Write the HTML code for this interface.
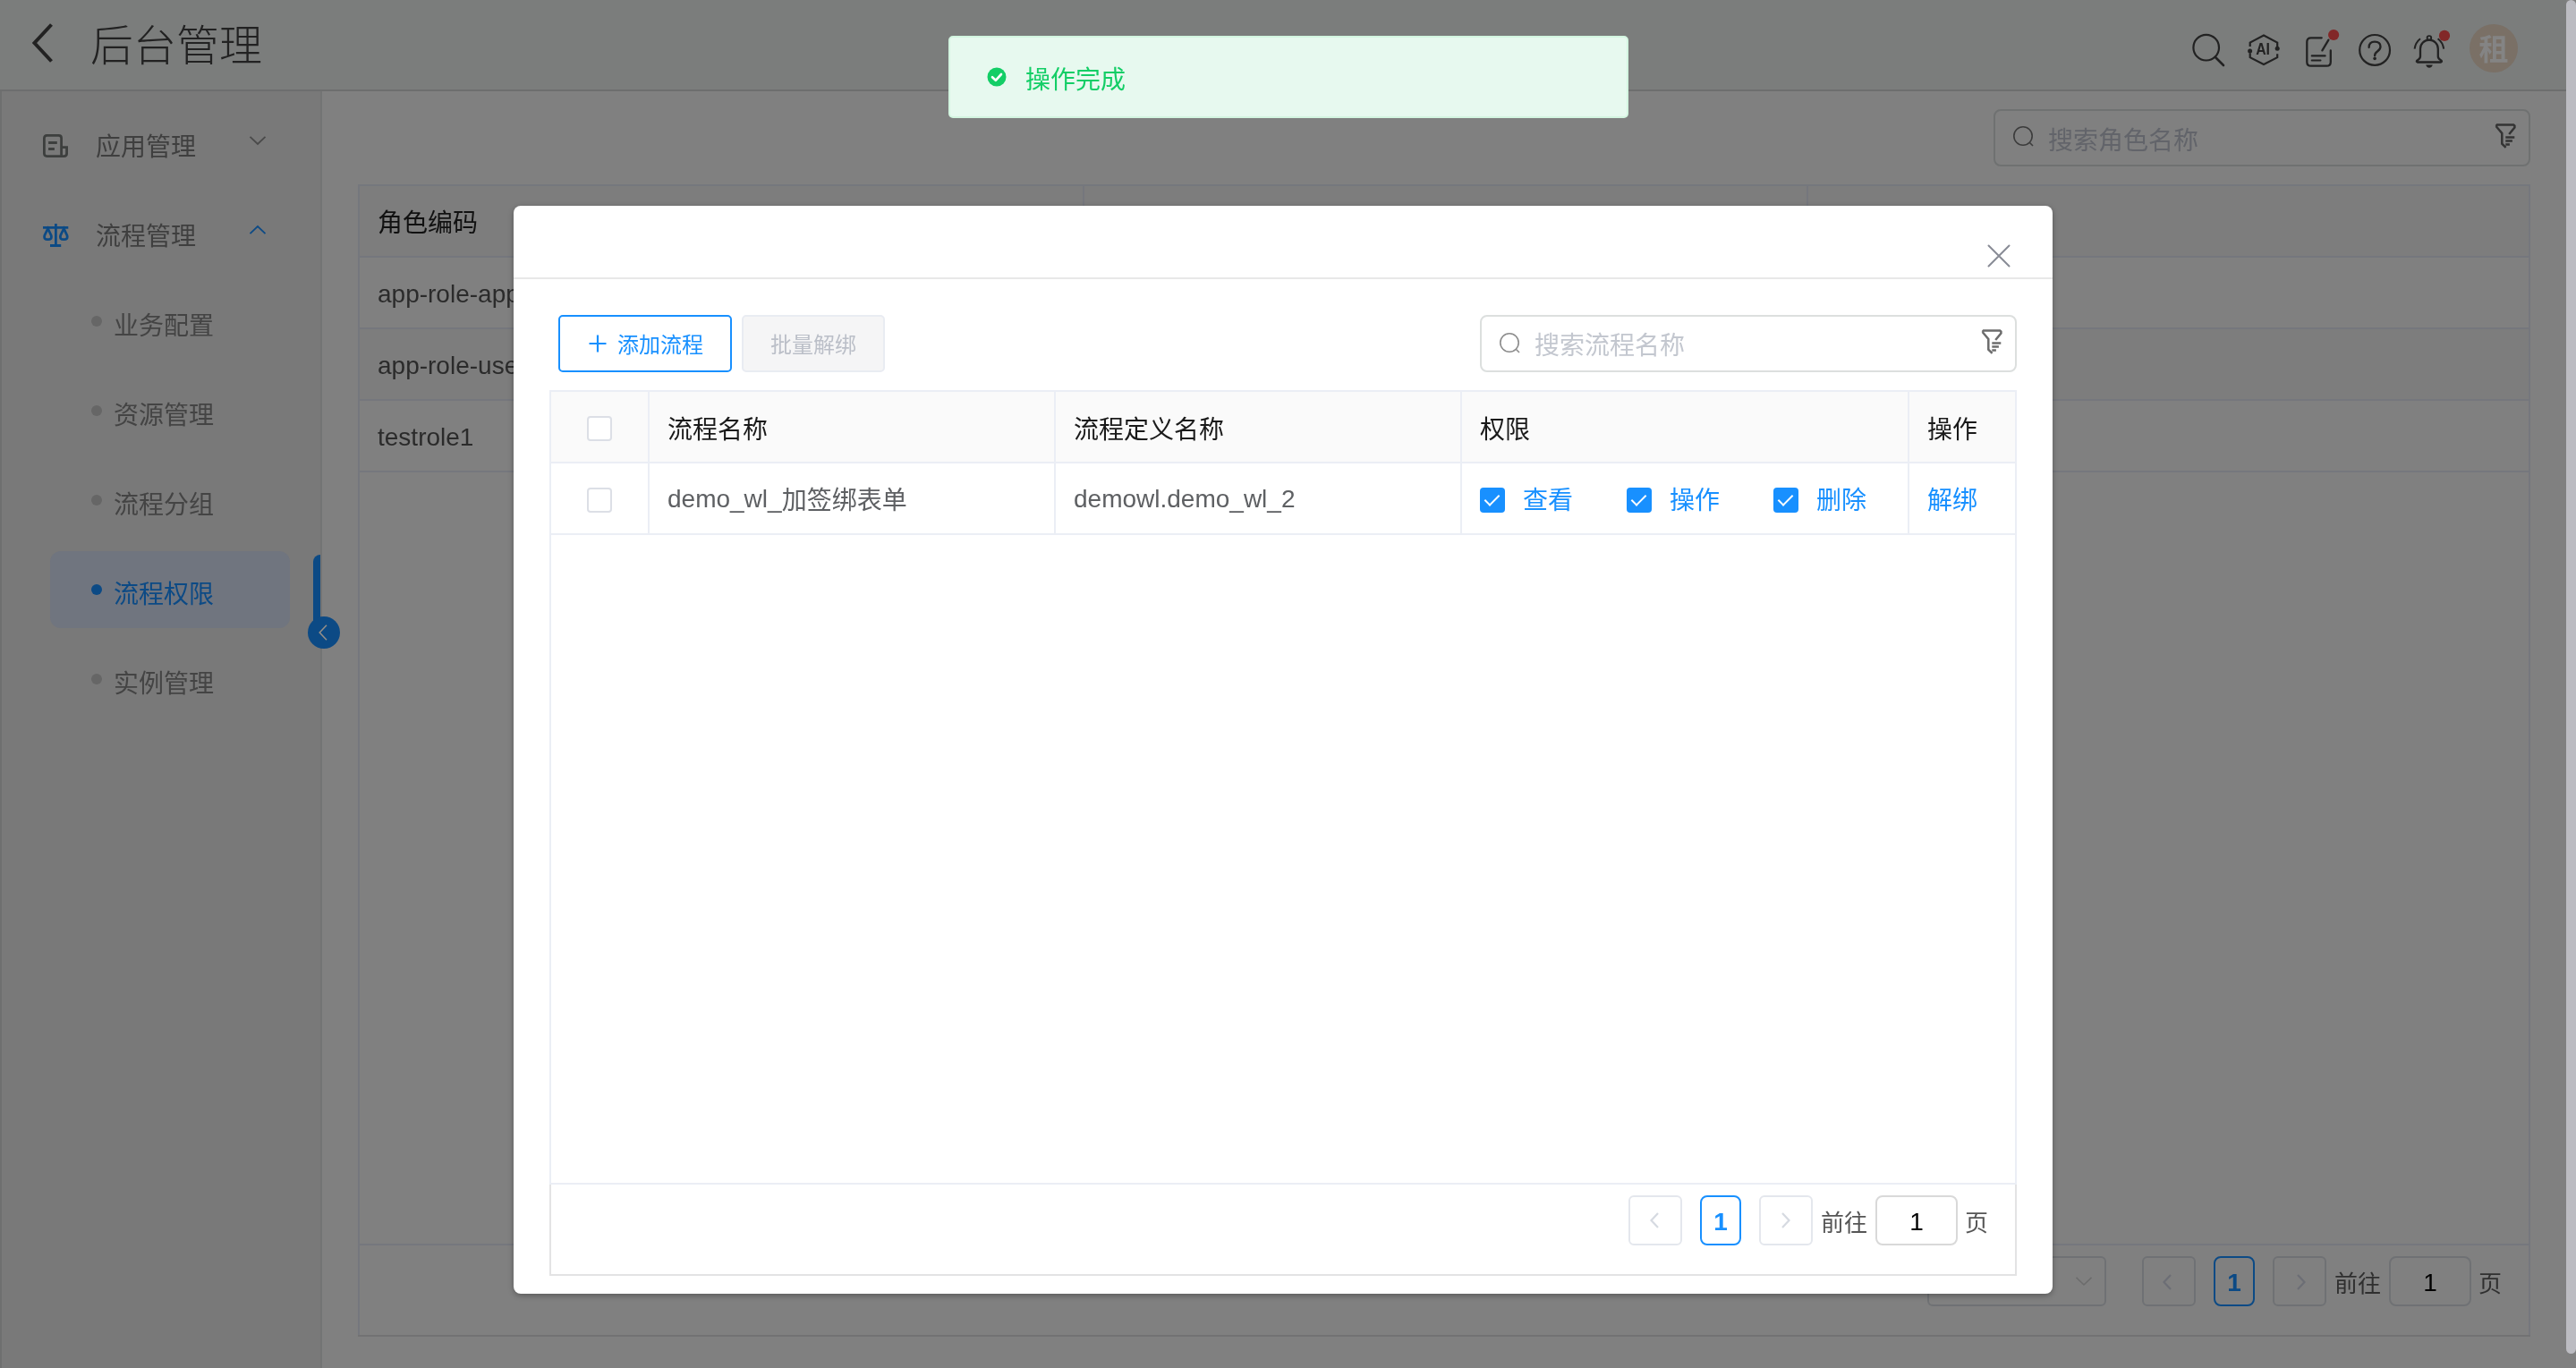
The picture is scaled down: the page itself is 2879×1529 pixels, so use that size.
<!DOCTYPE html>
<html lang="zh-CN">
<head>
<meta charset="utf-8">
<title>后台管理</title>
<style>
*{box-sizing:border-box;margin:0;padding:0}
html,body{width:2879px;height:1529px;overflow:hidden}
body{position:relative;background:#808080;font-family:"Liberation Sans","Noto Sans CJK SC",sans-serif;font-size:28px;color:#333}
.abs{position:absolute}
.t{position:absolute;white-space:nowrap;line-height:40px;height:40px;margin-top:2px;will-change:transform}
.lat{margin-top:0}
.cj{position:relative;top:2px}
svg{position:absolute;overflow:visible}
/* header */
#hdr{left:0;top:0;width:2868px;height:100px;background:#7b7d7c}
#hdrline{left:0;top:100px;width:2868px;height:2px;background:#6d6e6e}
#title{left:101px;top:26px;font-size:48px;line-height:48px;height:48px;font-weight:300;color:#222}
/* sidebar */
#side{left:2px;top:102px;width:356px;height:1427px;background:#797979}
#sideline{left:358px;top:102px;width:2px;height:1427px;background:#737474}
.m1{font-size:28px;color:#3f3f3f}
.m2{font-size:28px;color:#444}
.dot{position:absolute;width:12px;height:12px;border-radius:50%;background:#666}
#act{left:56px;top:616px;width:268px;height:86px;border-radius:12px;background:#70757f}
/* bg table */
.bl{position:absolute;background:#75777d}
.bt{font-size:28px;color:#2b2b2b}
/* modal */
#modal{left:574px;top:230px;width:1720px;height:1216px;background:#fff;border-radius:8px;box-shadow:0 2px 6px rgba(0,0,0,.3)}
.ml{position:absolute;background:#ebeef5}
.th{font-size:28px;color:#1a1a1a;margin-top:3px}
.td{font-size:28px;color:#5e6063}
.blue{color:#1890ff}
.cb{position:absolute;width:28px;height:28px;border:2px solid #dcdfe6;border-radius:4px;background:#fff}
.cbc{position:absolute;width:28px;height:28px;border-radius:4px;background:#1890ff}
.cbc:after{content:'';position:absolute;left:9px;top:4px;width:7px;height:14px;border:solid #fff;border-width:0 2.5px 2.5px 0;transform:rotate(45deg)}
.pbtn{position:absolute;height:56px;border:2px solid #e4e7ed;border-radius:6px;background:#fff}
.gpbtn{position:absolute;height:56px;border:2px solid #6f7174;border-radius:6px}
</style>
</head>
<body>
<!-- HEADER -->
<div class="abs" id="hdr"></div>
<div class="abs" id="hdrline"></div>
<svg style="left:34px;top:24px" width="28" height="48" viewBox="0 0 28 48"><path d="M23.500 3.500 L4.500 24 L23.500 44.500" fill="none" stroke="#222" stroke-width="4" stroke-linejoin="miter"/></svg>
<div class="t" id="title">后台管理</div>

<svg style="left:2448px;top:36px" width="40" height="40" viewBox="0 0 40 40"><circle cx="17.7" cy="17.2" r="14.3" fill="none" stroke="#222" stroke-width="2.2"/><path d="M28 28 L37 37" stroke="#222" stroke-width="2.6" stroke-linecap="round"/></svg>
<svg style="left:2510px;top:36px;will-change:transform" width="40" height="40" viewBox="0 0 40 40"><path d="M4.700 15.900 V11.600 L20 3.500 L35.200 11.600 V16 M35.200 24.300 V28.200 L20 36.100 L4.700 28.200 V23.200" fill="none" stroke="#222" stroke-width="2.200" stroke-linejoin="miter"/><circle cx="4.600" cy="21" r="2.500" fill="#222"/><circle cx="35.200" cy="18.300" r="2.500" fill="#222"/><text transform="translate(19.100 24.700) scale(0.890 1)" x="0" y="0" text-anchor="middle" font-family="Liberation Sans, sans-serif" font-weight="bold" font-size="17.800" fill="#222">AI</text></svg>
<svg style="left:2574px;top:30px" width="44" height="48" viewBox="0 0 44 48"><path d="M20.700 12.300 H8.800 Q4.300 12.300 4.300 16.800 V39.200 Q4.300 43.700 8.800 43.700 H26.300 Q30.800 43.700 30.800 39.200 V26.400" fill="none" stroke="#222" stroke-width="2.300" stroke-linecap="round"/><path d="M28.400 14.600 L21.400 26.400" stroke="#222" stroke-width="2.300" stroke-linecap="round"/><path d="M9.800 32.400 H24.600 M9.800 37.500 H19.400" stroke="#222" stroke-width="2.200" stroke-linecap="round"/><circle cx="34.100" cy="9" r="6.100" fill="#822828"/></svg>
<svg style="left:2634px;top:36px" width="40" height="40" viewBox="0 0 40 40"><circle cx="20.100" cy="19.900" r="16.900" fill="none" stroke="#222" stroke-width="2.200"/><path d="M13.600 17 Q13.600 10.600 20 10.600 Q26.500 10.600 26.500 16 Q26.500 19 23 21.500 Q20.100 23.500 20.100 26.200" fill="none" stroke="#222" stroke-width="2.300" stroke-linecap="round"/><circle cx="20.100" cy="29.400" r="1.800" fill="#222"/></svg>
<svg style="left:2694px;top:30px" width="48" height="50" viewBox="0 0 48 50"><circle cx="20.900" cy="12.400" r="2.300" fill="none" stroke="#222" stroke-width="1.900"/><path d="M11 33 V24.500 A9.900 9.900 0 0 1 30.800 24.500 V33 Q30.800 35.500 33.500 36.900 Q36.200 38.500 34 39.500 H7.800 Q5.600 38.500 8.300 36.900 Q11 35.500 11 33 Z" fill="none" stroke="#222" stroke-width="2.300" stroke-linejoin="round"/><path d="M17.200 42.400 H24.800 Q23.600 45.700 21 45.700 Q18.400 45.700 17.200 42.400 Z" fill="#222"/><path d="M11 13.300 Q5.600 17.500 4.600 24.600 M30.600 13.300 Q36.200 17.500 37.200 24.600" fill="none" stroke="#222" stroke-width="2" stroke-linecap="butt"/><circle cx="38" cy="9.900" r="6.100" fill="#822828"/></svg>
<div class="abs" style="left:2760px;top:27px;width:54px;height:54px;border-radius:50%;background:#7a7066"></div>
<div class="t" style="left:2770px;top:34px;font-size:33px;font-weight:700;color:#848484;width:34px;text-align:center">租</div>

<!-- SIDEBAR -->
<div class="abs" id="side"></div>
<div class="abs" id="sideline"></div>
<div class="abs" style="left:0;top:102px;width:2px;height:1427px;background:#6e6f6f"></div>

<svg style="left:48px;top:150px" width="28" height="26" viewBox="0 0 28 26"><path d="M4.400 1.400 H17.600 Q20.600 1.400 20.600 4.400 V24.600 H4.400 Q1.400 24.600 1.400 21.600 V4.400 Q1.400 1.400 4.400 1.400 Z M20.600 14.600 H26.600 V21.600 Q26.600 24.600 23.600 24.600 H20.600" fill="none" stroke="#3d3f3e" stroke-width="2.800"/><path d="M6.100 9.400 H15.800 M6.100 16.600 H12.900" stroke="#3d3f3e" stroke-width="3" fill="none"/></svg>
<div class="t m1" style="left:107px;top:143px">应用管理</div>
<svg style="left:279px;top:152px" width="18" height="10" viewBox="0 0 18 10"><path d="M0.5 0.8 L9 9 L17.5 0.8" fill="none" stroke="#4a4a4a" stroke-width="1.8"/></svg>
<svg style="left:48px;top:250px" width="28" height="26" viewBox="0 0 28 26"><g fill="none" stroke="#0c4a85" stroke-width="2.800"><path d="M0 4.400 H28.300 M14.400 0 V25 M8 24.500 H20.200"/><path d="M5.500 5.500 L1.900 13 Q0.500 17.700 5.500 17.700 Q10.500 17.700 9.100 13 Z"/><path d="M23.300 5.500 L19.700 13 Q18.300 17.700 23.300 17.700 Q28.300 17.700 26.900 13 Z"/></g></svg>
<div class="t m1" style="left:107px;top:243px">流程管理</div>
<svg style="left:279px;top:252px" width="18" height="10" viewBox="0 0 18 10"><path d="M0.5 9.2 L9 1 L17.5 9.2" fill="none" stroke="#0c4a85" stroke-width="1.8"/></svg>
<div class="dot" style="left:102px;top:353px"></div><div class="t m2" style="left:127px;top:343px">业务配置</div>
<div class="dot" style="left:102px;top:453px"></div><div class="t m2" style="left:127px;top:443px">资源管理</div>
<div class="dot" style="left:102px;top:553px"></div><div class="t m2" style="left:127px;top:543px">流程分组</div>
<div class="abs" id="act"></div>
<div class="dot" style="left:102px;top:653px;background:#0c4a85"></div><div class="t m2" style="left:127px;top:643px;color:#0c4a85">流程权限</div>
<div class="dot" style="left:102px;top:753px"></div><div class="t m2" style="left:127px;top:743px">实例管理</div>
<div class="abs" style="left:350px;top:620px;width:8px;height:80px;background:#0c4a85;border-radius:8px 0 0 0"></div>
<div class="abs" style="left:344px;top:689px;width:36px;height:36px;border-radius:50%;background:#0c4a85"></div>
<svg style="left:356px;top:698px" width="10" height="18" viewBox="0 0 10 18"><path d="M9 0.800 L1.200 9 L9 17.200" fill="none" stroke="#989088" stroke-width="1.500"/></svg>

<!-- BG CONTENT -->

<div class="abs" style="left:2228px;top:122px;width:600px;height:64px;border:2px solid #6f7171;border-radius:8px"></div>
<svg style="left:2249px;top:140px" width="26" height="26" viewBox="0 0 26 26"><circle cx="12" cy="12" r="10.2" fill="none" stroke="#3c3c3c" stroke-width="1.6"/><path d="M19.5 19.5 L23 23" stroke="#3c3c3c" stroke-width="1.6"/></svg>
<div class="t" style="left:2289px;top:136px;font-size:28px;color:#62646a">搜索角色名称</div>
<svg style="left:2786px;top:135px" width="28" height="32" viewBox="0 0 28 32"><path d="M3.600 6 L4.800 4.500 H23.200 L24.400 5.500 V7.600 L18.200 15 M3.600 6 L10.300 14 V25.700 L14.600 29.800" fill="none" stroke="#333" stroke-width="2.500" stroke-linejoin="miter"/><path d="M14.300 18.600 H24.300 M14.300 22.600 H21.900 M14.300 26.500 H18.900" stroke="#333" stroke-width="2.500" fill="none"/></svg>
<div class="abs" style="left:402px;top:208px;width:2424px;height:78px;background:#7d7d7d"></div>
<div class="abs" style="left:402px;top:368px;width:2424px;height:78px;background:#7d7d7d"></div>
<div class="bl" style="left:400px;top:206px;width:2428px;height:2px"></div>
<div class="bl" style="left:400px;top:206px;width:2px;height:1288px"></div>
<div class="bl" style="left:2826px;top:206px;width:2px;height:1288px"></div>
<div class="bl" style="left:400px;top:286px;width:2428px;height:2px"></div>
<div class="bl" style="left:400px;top:366px;width:2428px;height:2px"></div>
<div class="bl" style="left:400px;top:446px;width:2428px;height:2px"></div>
<div class="bl" style="left:400px;top:526px;width:2428px;height:2px"></div>
<div class="bl" style="left:400px;top:1390px;width:2428px;height:2px"></div>
<div class="bl" style="left:400px;top:1492px;width:2428px;height:2px;background:#727273"></div>
<div class="bl" style="left:1210px;top:206px;width:2px;height:80px"></div>
<div class="bl" style="left:2019px;top:206px;width:2px;height:80px"></div>
<div class="t bt" style="left:422px;top:228px;color:#111">角色编码</div>
<div class="t lat bt" style="left:422px;top:309px">app-role-app</div>
<div class="t lat bt" style="left:422px;top:389px">app-role-user</div>
<div class="t lat bt" style="left:422px;top:469px">testrole1</div>
<div class="gpbtn" style="left:2154px;top:1404px;width:200px;height:56px;border-radius:6px"></div>
<svg style="left:2320px;top:1427px" width="18" height="10" viewBox="0 0 18 10"><path d="M0.500 0.800 L9 9 L17.500 0.800" fill="none" stroke="#6c6c6c" stroke-width="1.600"/></svg>
<div class="gpbtn" style="left:2394px;top:1404px;width:60px"></div>
<svg style="left:2417px;top:1424px" width="10" height="18" viewBox="0 0 10 18"><path d="M9 1 L1.500 9 L9 17" fill="none" stroke="#6c6e75" stroke-width="2.200"/></svg>
<div class="gpbtn" style="left:2474px;top:1404px;width:46px;border-color:#0c4a85;border-radius:8px"></div>
<div class="t" style="left:2474px;top:1412px;width:46px;text-align:center;font-weight:bold;font-size:28px;color:#0c4a85">1</div>
<div class="gpbtn" style="left:2540px;top:1404px;width:60px"></div>
<svg style="left:2567px;top:1424px" width="10" height="18" viewBox="0 0 10 18"><path d="M1 1 L8.500 9 L1 17" fill="none" stroke="#6c6e75" stroke-width="2.200"/></svg>
<div class="t" style="left:2609px;top:1413px;font-size:26px;color:#2f2f2f">前往</div>
<div class="gpbtn" style="left:2670px;top:1404px;width:92px;border-radius:8px"></div>
<div class="t" style="left:2670px;top:1412px;width:92px;text-align:center;font-size:28px;color:#000">1</div>
<div class="t" style="left:2770px;top:1413px;font-size:26px;color:#2f2f2f">页</div>

<!-- TOAST -->

<div class="abs" style="left:1060px;top:40px;width:760px;height:92px;background:#e7f9ef;border:2px solid #d3f5e0;border-radius:5px"></div>
<svg style="left:1103px;top:75px" width="22" height="22" viewBox="0 0 22 22"><circle cx="11" cy="11" r="10.500" fill="#13ce66"/><path d="M6 11.200 L9.800 14.800 L16 8" fill="none" stroke="#fff" stroke-width="2.600" stroke-linecap="round" stroke-linejoin="round"/></svg>
<div class="t" style="left:1146px;top:68px;font-size:28px;color:#13ce66">操作完成</div>

<!-- MODAL -->
<div class="abs" id="modal">

<div class="abs" style="left:0;top:80px;width:1720px;height:2px;background:#e8e8e8"></div>
<svg style="left:1648px;top:44px" width="24" height="24" viewBox="0 0 24 24"><path d="M0.500 0.500 L23.500 23.500 M23.500 0.500 L0.500 23.500" stroke="#888b95" stroke-width="2" stroke-linecap="round" fill="none"/></svg>
<div class="abs" style="left:50px;top:122px;width:194px;height:64px;border:2px solid #1890ff;border-radius:5px;background:#fff"></div>
<svg style="left:84px;top:144px" width="20" height="20" viewBox="0 0 20 20"><path d="M10 0.500 V19.500 M0.500 10 H19.500" stroke="#1890ff" stroke-width="2.200" fill="none"/></svg>
<div class="t blue" style="left:116px;top:134px;font-size:24px">添加流程</div>
<div class="abs" style="left:255px;top:122px;width:160px;height:64px;border:2px solid #e9ecf2;border-radius:5px;background:#f5f5f6"></div>
<div class="t" style="left:287px;top:134px;font-size:24px;color:#bbbfc8">批量解绑</div>
<div class="abs" style="left:1080px;top:122px;width:600px;height:64px;border:2px solid #dcdfde;border-radius:8px;background:#fff"></div>
<svg style="left:1101px;top:141px" width="26" height="26" viewBox="0 0 26 26"><circle cx="12" cy="12" r="10.200" fill="none" stroke="#8c8c8c" stroke-width="1.600"/><path d="M19.500 19.500 L23 23" stroke="#8c8c8c" stroke-width="1.600"/></svg>
<div class="t" style="left:1141px;top:135px;font-size:28px;color:#c3c7cf">搜索流程名称</div>
<svg style="left:1638px;top:135px" width="28" height="32" viewBox="0 0 28 32"><path d="M3.600 6 L4.800 4.500 H23.200 L24.400 5.500 V7.600 L18.200 15 M3.600 6 L10.300 14 V25.700 L14.600 29.800" fill="none" stroke="#6c6c6c" stroke-width="2.500" stroke-linejoin="miter"/><path d="M14.300 18.600 H24.300 M14.300 22.600 H21.900 M14.300 26.500 H18.900" stroke="#6c6c6c" stroke-width="2.500" fill="none"/></svg>
<div class="abs" style="left:40px;top:206px;width:1640px;height:990px;border:2px solid #e3e3e4"></div>
<div class="abs" style="left:42px;top:208px;width:1636px;height:79px;background:#fafafa"></div>
<div class="ml" style="left:40px;top:206px;width:1640px;height:2px"></div>
<div class="ml" style="left:40px;top:286px;width:1640px;height:2px"></div>
<div class="ml" style="left:40px;top:366px;width:1640px;height:2px"></div>
<div class="ml" style="left:40px;top:206px;width:2px;height:886px"></div>
<div class="ml" style="left:1678px;top:206px;width:2px;height:886px"></div>
<div class="ml" style="left:150px;top:206px;width:2px;height:162px"></div>
<div class="ml" style="left:604px;top:206px;width:2px;height:162px"></div>
<div class="ml" style="left:1058px;top:206px;width:2px;height:162px"></div>
<div class="ml" style="left:1558px;top:206px;width:2px;height:162px"></div>
<div class="ml" style="left:40px;top:1092px;width:1640px;height:2px"></div>
<div class="cb" style="left:82px;top:235px"></div>
<div class="cb" style="left:82px;top:315px"></div>
<div class="t th" style="left:172px;top:228px">流程名称</div>
<div class="t th" style="left:626px;top:228px">流程定义名称</div>
<div class="t th" style="left:1080px;top:228px">权限</div>
<div class="t th" style="left:1580px;top:228px">操作</div>
<div class="t lat td" style="left:172px;top:308px">demo_wl_<span class="cj">加签绑表单</span></div>
<div class="t lat td" style="left:626px;top:308px">demowl.demo_wl_2</div>
<div class="cbc" style="left:1080px;top:315px"></div>
<div class="t td blue" style="left:1128px;top:308px">查看</div>
<div class="cbc" style="left:1244px;top:315px"></div>
<div class="t td blue" style="left:1292px;top:308px">操作</div>
<div class="cbc" style="left:1408px;top:315px"></div>
<div class="t td blue" style="left:1456px;top:308px">删除</div>
<div class="t td blue" style="left:1580px;top:308px">解绑</div>
<div class="pbtn" style="left:1246px;top:1106px;width:60px"></div>
<svg style="left:1270px;top:1125px" width="10" height="18" viewBox="0 0 10 18"><path d="M9 1 L1.500 9 L9 17" fill="none" stroke="#d6dae1" stroke-width="2.200"/></svg>
<div class="pbtn" style="left:1326px;top:1106px;width:46px;border-color:#1890ff;border-radius:8px"></div>
<div class="t blue" style="left:1326px;top:1114px;width:46px;text-align:center;font-weight:bold;font-size:28px">1</div>
<div class="pbtn" style="left:1392px;top:1106px;width:60px"></div>
<svg style="left:1417px;top:1125px" width="10" height="18" viewBox="0 0 10 18"><path d="M1 1 L8.500 9 L1 17" fill="none" stroke="#d6dae1" stroke-width="2.200"/></svg>
<div class="t" style="left:1461px;top:1115px;font-size:26px;color:#555">前往</div>
<div class="pbtn" style="left:1522px;top:1106px;width:92px;border-color:#d9d9d9;border-radius:8px"></div>
<div class="t" style="left:1522px;top:1114px;width:92px;text-align:center;font-size:28px;color:#000">1</div>
<div class="t" style="left:1622px;top:1115px;font-size:26px;color:#555">页</div>

</div>
<!-- SCROLLBAR -->
<div class="abs" style="left:2868px;top:0;width:11px;height:1529px;background:#808080"></div>
<div class="abs" style="left:2868px;top:0;width:11px;height:1513px;background:#bcbcc2;border-radius:6px"></div>
<script>(function(){var w=window.innerWidth;if(w&&Math.abs(w-2879)>3){document.documentElement.style.zoom=(w/2879);}})();</script>
</body>
</html>
